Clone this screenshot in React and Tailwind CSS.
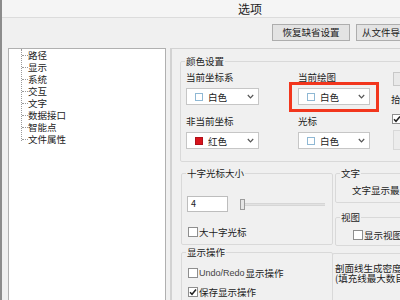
import React from "react";

const Chevron = () => (
  <svg width="7" height="5" viewBox="0 0 7 5" className="shrink-0">
    <path d="M0.8 1 L3.5 3.8 L6.2 1" fill="none" stroke="#555" strokeWidth="1.2" />
  </svg>
);

const Check = () => (
  <svg width="8" height="8" viewBox="0 0 8 8">
    <path d="M1 4.2 L3 6.3 L7 1.5" fill="none" stroke="#222" strokeWidth="1.5" />
  </svg>
);

function Box({ checked }) {
  return (
    <span className="w-[10px] h-[10px] shrink-0 border border-[#8e8e8e] bg-white flex items-center justify-center">
      {checked && <Check />}
    </span>
  );
}

function Combo({ label, red }) {
  return (
    <div className="h-[17px] border border-[#c6c6c6] bg-white flex items-center pl-[8px] pr-[4px]">
      <span
        className={
          red
            ? "w-[8px] h-[8px] bg-[#d8141c] border border-[#b0101a]"
            : "w-[8px] h-[8px] bg-white border border-[#8fb8d4]"
        }
      />
      <span className="ml-[5px] flex-1 text-[9.5px] leading-[12px]">{label}</span>
      <Chevron />
    </div>
  );
}

function Group({ title, className, children }) {
  return (
    <fieldset className={"border border-[#d9d9d9] rounded-[2px] " + className}>
      {title && (
        <legend className="ml-[4px] px-[1px] text-[9.5px] leading-[14px]">{title}</legend>
      )}
      {children}
    </fieldset>
  );
}

const tree = ["路径", "显示", "系统", "交互", "文字", "数据接口", "智能点", "文件属性"];

export default function App() {
  return (
    <div className="w-[400px] h-[300px] overflow-hidden bg-[#f0f0f0] border-l-2 border-[#8c8c8c] font-['Noto_Sans_CJK_SC',sans-serif] text-[#1c1c1c]">
      {/* title bar */}
      <div className="h-[18px] bg-[#f5f5f5] border-b border-[#dcdcdc] flex items-center pl-[236px] text-[12px]">
        选项
      </div>

      {/* top buttons */}
      <div className="flex gap-[6px] pl-[270px] pt-[6px] whitespace-nowrap">
        <button className="w-[78px] h-[17px] shrink-0 border border-[#adadad] bg-[#e3e3e3] text-[9.5px] leading-[15px]">
          恢复缺省设置
        </button>
        <button className="w-[70px] h-[17px] shrink-0 border border-[#adadad] bg-[#e3e3e3] text-[9.5px] leading-[15px] text-left pl-[5px]">
          从文件导入
        </button>
      </div>

      <div className="flex pl-[6px] mt-[7px]">
        {/* tree */}
        <div className="w-[158px] h-[260px] shrink-0 border border-[#b0b0b0] bg-white pl-[12px]">
          <div className="border-l border-dotted border-[#9a9a9a] h-[92px]">
            {tree.map((t) => (
              <div key={t} className="h-[12px] flex items-center">
                <span className="w-[6px] border-t border-dotted border-[#9a9a9a]" />
                <span className="text-[9.5px] leading-[12px]">{t}</span>
              </div>
            ))}
          </div>
        </div>

        {/* right panel */}
        <div className="ml-[4px] flex-1 min-w-[240px] h-[260px] border-l-2 border-t border-[#d2d2d2] pt-[5px]">
          <Group title="颜色设置" className="ml-[8px] w-[260px] h-[108px]">
            <div className="flex pl-[5px]">
              <div className="w-[73px] shrink-0">
                <div className="mt-[3px] h-[12px] text-[9.5px] leading-[12px]">当前坐标系</div>
                <div className="mt-[5px]"><Combo label="白色" /></div>
                <div className="mt-[10px] h-[12px] text-[9.5px] leading-[12px]">非当前坐标</div>
                <div className="mt-[5px]"><Combo label="红色" red /></div>
              </div>
              <div className="relative ml-[39px] w-[72px] shrink-0">
                <div className="mt-[3px] h-[12px] text-[9.5px] leading-[12px]">当前绘图</div>
                <div className="mt-[5px]"><Combo label="白色" /></div>
                <div className="mt-[10px] h-[12px] text-[9.5px] leading-[12px]">光标</div>
                <div className="mt-[5px]"><Combo label="白色" /></div>
                <div className="absolute left-[-9px] top-[14px] w-[90px] h-[30px] border-[3px] border-[#f2361d]" />
              </div>
              <div className="ml-[21px] w-[40px] shrink-0 flex flex-col">
                <div className="mt-[4px] ml-[2px] h-[14px] w-[30px] border border-[#c8c8c8] bg-[#e9e9e9]" />
                <div className="mt-[7px] h-[12px] text-[9.5px] leading-[12px]">拾取</div>
                <div className="mt-[9px] ml-[1px]"><Box checked /></div>
                <div className="mt-[6px] ml-[2px] h-[20px] w-[30px] border border-[#d8d8d8] bg-[#ececec]" />
              </div>
            </div>
          </Group>

          <div className="flex mt-[4px]">
            {/* left column */}
            <div className="ml-[9px] w-[152px] shrink-0">
              <Group title="十字光标大小" className="h-[79px]">
                <div className="flex items-center mt-[16px] pl-[5px]">
                  <div className="w-[41px] h-[16px] border border-[#bdbdbd] bg-white text-[9px] leading-[14px] pl-[3px]">
                    4
                  </div>
                  <div className="ml-[12px] w-[85px] h-[12px] flex items-center">
                    <span className="w-[5px] h-[11px] border border-[#9c9c9c] bg-[#e6e6e6] shrink-0" />
                    <span className="flex-1 h-[3px] bg-[#e2e2e2] border-y border-[#d6d6d6]" />
                  </div>
                </div>
                <label className="flex items-center mt-[14px] pl-[6px] gap-[1px] text-[9.5px] leading-[12px]">
                  <Box />
                  大十字光标
                </label>
              </Group>
              <Group title="显示操作" className="h-[60px]">
                <label className="flex items-center mt-[8px] pl-[6px] gap-[1px] text-[9.5px] leading-[12px] whitespace-nowrap">
                  <Box />
                  <span className="font-['Liberation_Sans',sans-serif] text-[9px] text-[#444]">Undo/Redo</span>显示操作
                </label>
                <label className="flex items-center mt-[7px] pl-[6px] gap-[1px] text-[9.5px] leading-[12px]">
                  <Box checked />
                  保存显示操作
                </label>
              </Group>
            </div>

            {/* right column */}
            <div className="ml-[2px] w-[120px] shrink-0">
              <Group title="文字" className="h-[37px]">
                <div className="mt-[4px] pl-[16px] text-[9.5px] leading-[12px] whitespace-nowrap">文字显示最小尺寸</div>
              </Group>
              <Group title="视图" className="mt-[7px] h-[36px]">
                <label className="flex items-center mt-[5px] pl-[17px] gap-[1px] text-[9.5px] leading-[12px] whitespace-nowrap">
                  <Box />
                  显示视图边框
                </label>
              </Group>
              <fieldset className="mt-[7px] ml-[-3px] h-[60px] border border-[#d9d9d9] rounded-[2px] pt-[9px] pl-[2px]">
                <div className="text-[9.5px] leading-[10px] whitespace-nowrap">剖面线生成密度</div>
                <div className="text-[9.5px] leading-[10px] whitespace-nowrap">(填充线最大数目)</div>
              </fieldset>
            </div>
          </div>
        </div>
      </div>
    </div>
  );
}
